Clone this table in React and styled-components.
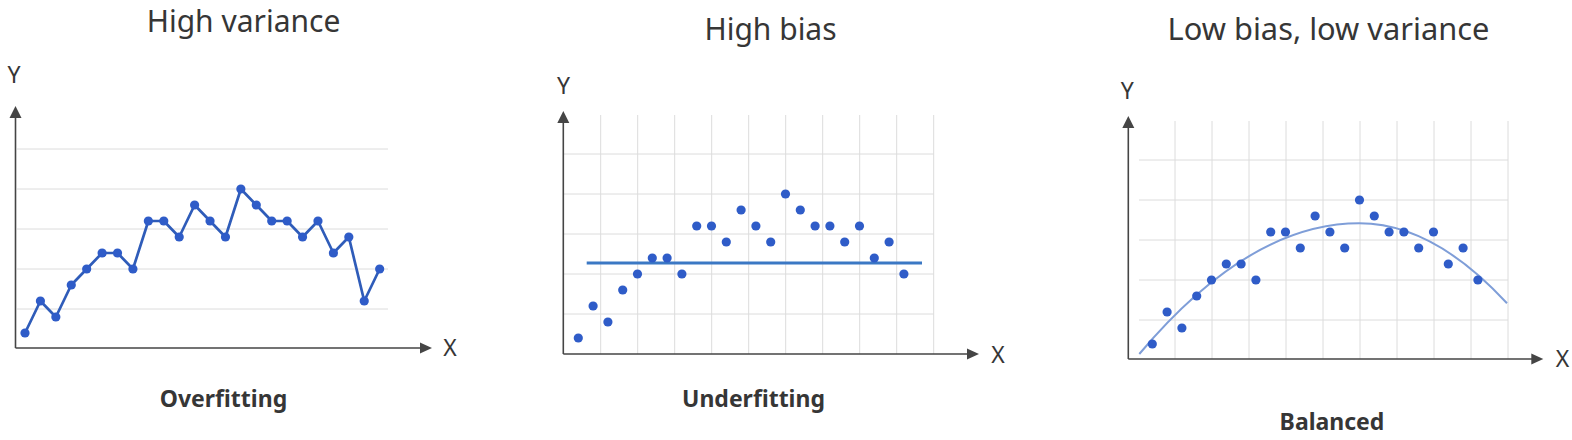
import React from "react";
import styled, { createGlobalStyle } from "styled-components";

const GlobalStyle = createGlobalStyle`
  html, body { margin: 0; padding: 0; background: #ffffff; }
  body { font-family: "Noto Sans", "Open Sans", sans-serif; }
`;

const FONT = `"Noto Sans", "Open Sans", sans-serif`;
const TOP = 56;
const CHART_H = 320;

const Page = styled.main`
  display: flex;
  width: 1572px;
  height: 440px;
  overflow: hidden;
  background: #ffffff;
`;

const Panel = styled.section`
  flex: none;
  display: flex;
  flex-direction: column;
  width: ${(p) => p.$w}px;
`;

const padFor = (center, w) => `
  padding-left: ${Math.max(0, 2 * center - w)}px;
  padding-right: ${Math.max(0, w - 2 * center)}px;
`;

const Title = styled.h2`
  margin: 0;
  box-sizing: border-box;
  height: ${TOP}px;
  padding-top: ${(p) => p.$top}px;
  ${(p) => padFor(p.$center, p.$w)}
  font-family: ${FONT};
  font-weight: 400;
  font-size: ${(p) => p.$size || 30}px;
  line-height: 41px;
  color: #363636;
  text-align: center;
  white-space: nowrap;
`;

const Chart = styled.svg`
  display: block;
  flex: none;
  width: ${(p) => p.$w}px;
  height: ${CHART_H}px;
`;

const Caption = styled.p`
  margin: 0;
  padding-top: ${(p) => p.$top}px;
  ${(p) => padFor(p.$center, p.$w)}
  font-family: ${FONT};
  font-weight: 700;
  font-size: 23px;
  line-height: 30px;
  color: #363636;
  text-align: center;
  white-space: nowrap;
`;

const AXIS = "#454545";
const GRID = "#dcdcdc";
const DOT = "#2f5cc8";

function Axes({ ox, oy, yTip, xTip, yLabel, xLabel }) {
  return (
    <g>
      <line x1={ox} y1={oy} x2={ox} y2={yTip + 10} stroke={AXIS} strokeWidth="1.6" />
      <line x1={ox} y1={oy} x2={xTip - 10} y2={oy} stroke={AXIS} strokeWidth="1.6" />
      <polygon points={`${ox},${yTip} ${ox - 6},${yTip + 12} ${ox + 6},${yTip + 12}`} fill={AXIS} />
      <polygon points={`${xTip},${oy} ${xTip - 12},${oy - 5.5} ${xTip - 12},${oy + 5.5}`} fill={AXIS} />
      <text x={yLabel[0]} y={yLabel[1]} textAnchor="middle" fontFamily={FONT} fontSize="23" fill="#363636">Y</text>
      <text x={xLabel[0]} y={xLabel[1]} textAnchor="middle" fontFamily={FONT} fontSize="23" fill="#363636">X</text>
    </g>
  );
}

function Grid({ rows, cols, x1, x2, y1, y2 }) {
  return (
    <g stroke={GRID} strokeWidth="1">
      {rows.map((y) => (
        <line key={`r${y}`} x1={x1} y1={y} x2={x2} y2={y} />
      ))}
      {cols.map((x) => (
        <line key={`c${x}`} x1={x} y1={y1} x2={x} y2={y2} />
      ))}
    </g>
  );
}

function Dots({ pts }) {
  return (
    <g fill={DOT}>
      {pts.map(([x, y], i) => (
        <circle key={i} cx={x} cy={y} r="4.6" />
      ))}
    </g>
  );
}

const LEVELS_A = [9, 7, 8, 6, 5, 4, 4, 5, 2, 2, 3, 1, 2, 3, 0, 1, 2, 2, 3, 2, 4, 3, 7, 5];
const LEVELS_B = [9, 7, 8, 6, 5, 4, 4, 5, 2, 2, 3, 1, 2, 3, 0, 1, 2, 2, 3, 2, 4, 3, 5];

const toPts = (levels, x0, dx, y0) => levels.map((l, i) => [x0 + i * dx, y0 + l * 16]);

const p1 = toPts(LEVELS_A, 25, 15.42, 189);
const p2 = toPts(LEVELS_B, 578.3, 14.8, 194);
const p3 = toPts(LEVELS_B, 1152.3, 14.8, 200);

const range = (start, step, n) => Array.from({ length: n }, (_, i) => start + i * step);

const panels = [
  { left: 0, w: 520, titleTop: 0, titleCenter: 243.5, titleSize: 30, capTop: 6.5, capCenter: 223.5 },
  { left: 520, w: 560, titleTop: 7.5, titleCenter: 250.5, titleSize: 30, capTop: 6.5, capCenter: 233.5 },
  { left: 1080, w: 492, titleTop: 7.5, titleCenter: 248.5, titleSize: 30.8, capTop: 29.8, capCenter: 252 },
];

function ChartBox({ panel, label, children }) {
  return (
    <Chart
      $w={panel.w}
      viewBox={`${panel.left} ${TOP} ${panel.w} ${CHART_H}`}
      role="img"
      aria-label={label}
    >
      {children}
    </Chart>
  );
}

export default function App() {
  const [a, b, c] = panels;
  return (
    <>
      <GlobalStyle />
      <Page>
        <Panel $w={a.w}>
          <Title $top={a.titleTop} $center={a.titleCenter} $w={a.w} $size={a.titleSize}>High variance</Title>
          <ChartBox panel={a} label="Overfitting chart">
            <Grid rows={range(149, 40, 5)} cols={[]} x1={17} x2={388} />
            <Axes ox={15.5} oy={348} yTip={106} xTip={432} yLabel={[14, 83]} xLabel={[450, 356]} />
            <polyline
              points={p1.map((p) => p.join(",")).join(" ")}
              fill="none"
              stroke="#2f5cb9"
              strokeWidth="2.7"
              strokeLinejoin="round"
            />
            <Dots pts={p1} />
          </ChartBox>
          <Caption $top={a.capTop} $center={a.capCenter} $w={a.w}>Overfitting</Caption>
        </Panel>

        <Panel $w={b.w}>
          <Title $top={b.titleTop} $center={b.titleCenter} $w={b.w} $size={b.titleSize}>High bias</Title>
          <ChartBox panel={b} label="Underfitting chart">
            <Grid
              rows={range(154, 40, 5)}
              cols={range(600.7, 37, 10)}
              x1={564}
              x2={933.7}
              y1={115}
              y2={354}
            />
            <Axes ox={563.3} oy={354} yTip={111} xTip={979} yLabel={[563.5, 94]} xLabel={[998, 363]} />
            <line x1={586.7} y1={263} x2={922} y2={263} stroke="#3b78c4" strokeWidth="3" />
            <Dots pts={p2} />
          </ChartBox>
          <Caption $top={b.capTop} $center={b.capCenter} $w={b.w}>Underfitting</Caption>
        </Panel>

        <Panel $w={c.w}>
          <Title $top={c.titleTop} $center={c.titleCenter} $w={c.w} $size={c.titleSize}>Low bias, low variance</Title>
          <ChartBox panel={c} label="Balanced chart">
            <Grid
              rows={range(160, 40, 5)}
              cols={range(1175, 37, 10)}
              x1={1139}
              x2={1508}
              y1={121}
              y2={359}
            />
            <Axes ox={1128.3} oy={359} yTip={116} xTip={1543.3} yLabel={[1127.3, 99]} xLabel={[1562.5, 367]} />
            <path
              d="M1139.3 354 Q1249.3 223.3 1359.3 223.3 Q1433.2 223.3 1507 303.3"
              fill="none"
              stroke="#7f9ed8"
              strokeWidth="2"
            />
            <Dots pts={p3} />
          </ChartBox>
          <Caption $top={c.capTop} $center={c.capCenter} $w={c.w}>Balanced</Caption>
        </Panel>
      </Page>
    </>
  );
}
